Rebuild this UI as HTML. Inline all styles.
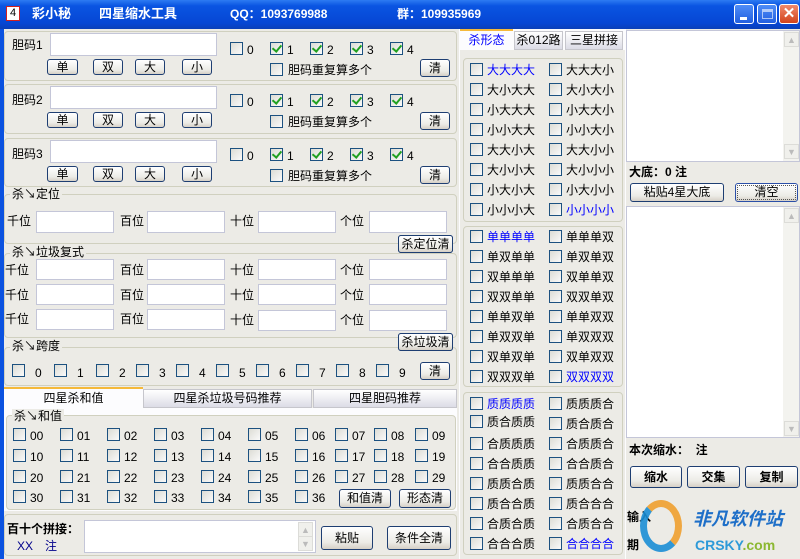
<!DOCTYPE html>
<html><head><meta charset="utf-8">
<style>
*{box-sizing:border-box;margin:0;padding:0}
body{width:800px;height:559px;overflow:hidden;background:#ecebe6;font-family:"Liberation Sans","WenQuanYi Zen Hei","Noto Sans CJK SC",sans-serif;font-size:12px;color:#000;position:relative}
div,span{position:absolute}
.t{white-space:nowrap;line-height:14px}
.title{left:0;top:0;width:800px;height:29px;background:linear-gradient(#2d7bf2,#0a55e2 20%,#0646d4 80%,#0a3fb8);}
.frame{left:0;top:29px;width:4px;height:530px;background:#0b52e0}
.grp{border:1px solid #d0d0bf;border-radius:4px;background:#ecebe6}
.in{background:#fff;border:1px solid #c4c6d8}
.btn{border:1px solid #1e3e72;border-radius:3px;background:linear-gradient(#fff,#ecebe6 70%,#d6d0c6);text-align:center;line-height:14px;font-size:12px}
.cb{width:13px;height:13px;border:1px solid #1c5180;background:linear-gradient(135deg,#dcdcd5,#fafafa)}
.ck::after{content:"";position:absolute;left:3px;top:0px;width:4px;height:7px;border:solid #21a121;border-width:0 2px 2px 0;transform:rotate(40deg)}
.leg{background:#ecebe6;padding:0 2px}
.fs{border:1px solid #d0d0bf;border-radius:4px}
.b{color:#0000ff}
.sb{width:16px;background:#f3f3ef}
.ar{width:15px;height:15px;border:1px solid #dcdcd8;background:#f0f0ec;color:#bbb;font-size:9px;text-align:center;line-height:14px}
</style></head><body>
<div class="title"></div>
<div style="left:6px;top:6px;width:14px;height:15px;border:1px solid #d02020;background:#fff;color:#000;font-size:11px;text-align:center;line-height:13px">4</div>
<div class="t" style="left:32px;top:7px;color:#fff;font-weight:bold;font-size:13px">彩小秘</div>
<div class="t" style="left:99px;top:7px;color:#fff;font-weight:bold;font-size:13px">四星缩水工具</div>
<div class="t" style="left:230px;top:7px;color:#fff;font-weight:bold;font-size:12px">QQ：1093769988</div>
<div class="t" style="left:397px;top:7px;color:#fff;font-weight:bold;font-size:12px">群：109935969</div>
<div style="left:734px;top:4px;width:20px;height:20px;border:1px solid #fff;border-radius:3px;background:linear-gradient(#4f8df7,#225fe0)"><span style="left:5px;top:12px;width:7px;height:3px;background:#fff"></span></div>
<div style="left:757px;top:4px;width:20px;height:20px;border:1px solid #fff;border-radius:3px;background:linear-gradient(#4f8df7,#225fe0)"><span style="left:4px;top:4px;width:11px;height:10px;border:1px solid #fff;border-top-width:3px;opacity:.6"></span></div>
<div style="left:779px;top:4px;width:20px;height:20px;border:1px solid #fff;border-radius:3px;background:linear-gradient(#f08a6c,#d2431c);color:#fff;font-weight:bold;font-size:15px;text-align:center;line-height:18px">✕</div>
<div class="frame"></div>

<!-- 胆码 groups -->
<div class="grp" style="left:4px;top:31px;width:453px;height:50px"></div>
<div class="grp" style="left:4px;top:84px;width:453px;height:50px"></div>
<div class="grp" style="left:4px;top:138px;width:453px;height:49px"></div>

<div class="t" style="left:12px;top:38px">胆码1</div>
<div class="in" style="left:50px;top:33px;width:167px;height:23px"></div>
<div class="btn" style="left:47px;top:59px;width:31px;height:16px">单</div>
<div class="btn" style="left:93px;top:59px;width:30px;height:16px">双</div>
<div class="btn" style="left:135px;top:59px;width:30px;height:16px">大</div>
<div class="btn" style="left:182px;top:59px;width:30px;height:16px">小</div>
<div class="cb" style="left:230px;top:42px"></div><div class="t" style="left:247px;top:43px">0</div>
<div class="cb ck" style="left:270px;top:42px"></div><div class="t" style="left:287px;top:43px">1</div>
<div class="cb ck" style="left:310px;top:42px"></div><div class="t" style="left:327px;top:43px">2</div>
<div class="cb ck" style="left:350px;top:42px"></div><div class="t" style="left:367px;top:43px">3</div>
<div class="cb ck" style="left:390px;top:42px"></div><div class="t" style="left:407px;top:43px">4</div>
<div class="cb" style="left:270px;top:63px"></div><div class="t" style="left:288px;top:63px">胆码重复算多个</div>
<div class="btn" style="left:420px;top:59px;width:30px;height:18px;line-height:16px">清</div>

<div class="t" style="left:12px;top:93px">胆码2</div>
<div class="in" style="left:50px;top:86px;width:167px;height:23px"></div>
<div class="btn" style="left:47px;top:112px;width:31px;height:16px">单</div>
<div class="btn" style="left:93px;top:112px;width:30px;height:16px">双</div>
<div class="btn" style="left:135px;top:112px;width:30px;height:16px">大</div>
<div class="btn" style="left:182px;top:112px;width:30px;height:16px">小</div>
<div class="cb" style="left:230px;top:94px"></div><div class="t" style="left:247px;top:95px">0</div>
<div class="cb ck" style="left:270px;top:94px"></div><div class="t" style="left:287px;top:95px">1</div>
<div class="cb ck" style="left:310px;top:94px"></div><div class="t" style="left:327px;top:95px">2</div>
<div class="cb ck" style="left:350px;top:94px"></div><div class="t" style="left:367px;top:95px">3</div>
<div class="cb ck" style="left:390px;top:94px"></div><div class="t" style="left:407px;top:95px">4</div>
<div class="cb" style="left:270px;top:115px"></div><div class="t" style="left:288px;top:115px">胆码重复算多个</div>
<div class="btn" style="left:420px;top:112px;width:30px;height:18px;line-height:16px">清</div>

<div class="t" style="left:12px;top:147px">胆码3</div>
<div class="in" style="left:50px;top:140px;width:167px;height:23px"></div>
<div class="btn" style="left:47px;top:166px;width:31px;height:16px">单</div>
<div class="btn" style="left:93px;top:166px;width:30px;height:16px">双</div>
<div class="btn" style="left:135px;top:166px;width:30px;height:16px">大</div>
<div class="btn" style="left:182px;top:166px;width:30px;height:16px">小</div>
<div class="cb" style="left:230px;top:148px"></div><div class="t" style="left:247px;top:149px">0</div>
<div class="cb ck" style="left:270px;top:148px"></div><div class="t" style="left:287px;top:149px">1</div>
<div class="cb ck" style="left:310px;top:148px"></div><div class="t" style="left:327px;top:149px">2</div>
<div class="cb ck" style="left:350px;top:148px"></div><div class="t" style="left:367px;top:149px">3</div>
<div class="cb ck" style="left:390px;top:148px"></div><div class="t" style="left:407px;top:149px">4</div>
<div class="cb" style="left:270px;top:169px"></div><div class="t" style="left:288px;top:169px">胆码重复算多个</div>
<div class="btn" style="left:420px;top:166px;width:30px;height:18px;line-height:16px">清</div>

<!-- 定位 -->
<div class="fs" style="left:4px;top:194px;width:453px;height:50px"></div>
<div class="t leg" style="left:10px;top:187px">杀↘定位</div>
<div class="t" style="left:7px;top:214px">千位</div><div class="in" style="left:36px;top:211px;width:78px;height:22px"></div>
<div class="t" style="left:120px;top:214px">百位</div><div class="in" style="left:147px;top:211px;width:78px;height:22px"></div>
<div class="t" style="left:230px;top:214px">十位</div><div class="in" style="left:258px;top:211px;width:78px;height:22px"></div>
<div class="t" style="left:340px;top:214px">个位</div><div class="in" style="left:369px;top:211px;width:78px;height:22px"></div>
<div class="btn" style="left:398px;top:235px;width:55px;height:18px;line-height:16px">杀定位清</div>

<!-- 垃圾复式 -->
<div class="fs" style="left:4px;top:253px;width:453px;height:85px"></div>
<div class="t leg" style="left:10px;top:245px">杀↘垃圾复式</div>
<div class="btn" style="left:398px;top:235px;width:55px;height:18px;line-height:16px">杀定位清</div>
<div class="t" style="left:5px;top:263px">千位</div><div class="in" style="left:36px;top:259px;width:78px;height:21px"></div>
<div class="t" style="left:120px;top:263px">百位</div><div class="in" style="left:147px;top:259px;width:78px;height:21px"></div>
<div class="t" style="left:230px;top:263px">十位</div><div class="in" style="left:258px;top:259px;width:78px;height:21px"></div>
<div class="t" style="left:340px;top:263px">个位</div><div class="in" style="left:369px;top:259px;width:78px;height:21px"></div>
<div class="t" style="left:5px;top:288px">千位</div><div class="in" style="left:36px;top:284px;width:78px;height:21px"></div>
<div class="t" style="left:120px;top:288px">百位</div><div class="in" style="left:147px;top:284px;width:78px;height:21px"></div>
<div class="t" style="left:230px;top:288px">十位</div><div class="in" style="left:258px;top:284px;width:78px;height:21px"></div>
<div class="t" style="left:340px;top:288px">个位</div><div class="in" style="left:369px;top:284px;width:78px;height:21px"></div>
<div class="t" style="left:5px;top:312px">千位</div><div class="in" style="left:36px;top:309px;width:78px;height:21px"></div>
<div class="t" style="left:120px;top:312px">百位</div><div class="in" style="left:147px;top:309px;width:78px;height:21px"></div>
<div class="t" style="left:230px;top:313px">十位</div><div class="in" style="left:258px;top:310px;width:78px;height:21px"></div>
<div class="t" style="left:340px;top:313px">个位</div><div class="in" style="left:369px;top:310px;width:78px;height:21px"></div>
<div class="btn" style="left:398px;top:333px;width:55px;height:18px;line-height:16px">杀垃圾清</div>

<!-- 跨度 -->
<div class="fs" style="left:4px;top:347px;width:453px;height:39px"></div>
<div class="t leg" style="left:10px;top:339px">杀↘跨度</div>
<div class="btn" style="left:398px;top:333px;width:55px;height:18px;line-height:16px">杀垃圾清</div>
<div class="cb" style="left:12px;top:364px"></div><div class="t" style="left:35px;top:366px">0</div>
<div class="cb" style="left:54px;top:364px"></div><div class="t" style="left:77px;top:366px">1</div>
<div class="cb" style="left:96px;top:364px"></div><div class="t" style="left:119px;top:366px">2</div>
<div class="cb" style="left:136px;top:364px"></div><div class="t" style="left:159px;top:366px">3</div>
<div class="cb" style="left:176px;top:364px"></div><div class="t" style="left:199px;top:366px">4</div>
<div class="cb" style="left:216px;top:364px"></div><div class="t" style="left:239px;top:366px">5</div>
<div class="cb" style="left:256px;top:364px"></div><div class="t" style="left:279px;top:366px">6</div>
<div class="cb" style="left:296px;top:364px"></div><div class="t" style="left:319px;top:366px">7</div>
<div class="cb" style="left:336px;top:364px"></div><div class="t" style="left:359px;top:366px">8</div>
<div class="cb" style="left:376px;top:364px"></div><div class="t" style="left:399px;top:366px">9</div>
<div class="btn" style="left:420px;top:362px;width:30px;height:18px;line-height:16px">清</div>

<!-- bottom tabs -->
<div style="left:4px;top:387px;width:139px;height:21px;background:#fcfcfe;border-top:2px solid #f5b93a;text-align:center;line-height:18px">四星杀和值</div>
<div style="left:143px;top:389px;width:169px;height:19px;background:linear-gradient(#fff,#dcdce6);border:1px solid #c6c6cc;text-align:center;line-height:17px">四星杀垃圾号码推荐</div>
<div style="left:313px;top:389px;width:144px;height:19px;background:linear-gradient(#fff,#dcdce6);border:1px solid #c6c6cc;text-align:center;line-height:17px">四星胆码推荐</div>
<div style="left:4px;top:408px;width:453px;height:103px;background:#fcfcfe"></div>
<div class="fs" style="left:6px;top:415px;width:450px;height:95px;background:#ecebe6"></div>
<div class="t leg" style="left:12px;top:409px">杀↘和值</div>
<!-- sum checkboxes rows -->
<div class="cb" style="left:13px;top:428px"></div><div class="t" style="left:30px;top:429px">00</div>
<div class="cb" style="left:60px;top:428px"></div><div class="t" style="left:77px;top:429px">01</div>
<div class="cb" style="left:107px;top:428px"></div><div class="t" style="left:124px;top:429px">02</div>
<div class="cb" style="left:154px;top:428px"></div><div class="t" style="left:171px;top:429px">03</div>
<div class="cb" style="left:201px;top:428px"></div><div class="t" style="left:218px;top:429px">04</div>
<div class="cb" style="left:248px;top:428px"></div><div class="t" style="left:265px;top:429px">05</div>
<div class="cb" style="left:295px;top:428px"></div><div class="t" style="left:312px;top:429px">06</div>
<div class="cb" style="left:335px;top:428px"></div><div class="t" style="left:352px;top:429px">07</div>
<div class="cb" style="left:374px;top:428px"></div><div class="t" style="left:391px;top:429px">08</div>
<div class="cb" style="left:415px;top:428px"></div><div class="t" style="left:432px;top:429px">09</div>

<div class="cb" style="left:13px;top:449px"></div><div class="t" style="left:30px;top:450px">10</div>
<div class="cb" style="left:60px;top:449px"></div><div class="t" style="left:77px;top:450px">11</div>
<div class="cb" style="left:107px;top:449px"></div><div class="t" style="left:124px;top:450px">12</div>
<div class="cb" style="left:154px;top:449px"></div><div class="t" style="left:171px;top:450px">13</div>
<div class="cb" style="left:201px;top:449px"></div><div class="t" style="left:218px;top:450px">14</div>
<div class="cb" style="left:248px;top:449px"></div><div class="t" style="left:265px;top:450px">15</div>
<div class="cb" style="left:295px;top:449px"></div><div class="t" style="left:312px;top:450px">16</div>
<div class="cb" style="left:335px;top:449px"></div><div class="t" style="left:352px;top:450px">17</div>
<div class="cb" style="left:374px;top:449px"></div><div class="t" style="left:391px;top:450px">18</div>
<div class="cb" style="left:415px;top:449px"></div><div class="t" style="left:432px;top:450px">19</div>

<div class="cb" style="left:13px;top:470px"></div><div class="t" style="left:30px;top:471px">20</div>
<div class="cb" style="left:60px;top:470px"></div><div class="t" style="left:77px;top:471px">21</div>
<div class="cb" style="left:107px;top:470px"></div><div class="t" style="left:124px;top:471px">22</div>
<div class="cb" style="left:154px;top:470px"></div><div class="t" style="left:171px;top:471px">23</div>
<div class="cb" style="left:201px;top:470px"></div><div class="t" style="left:218px;top:471px">24</div>
<div class="cb" style="left:248px;top:470px"></div><div class="t" style="left:265px;top:471px">25</div>
<div class="cb" style="left:295px;top:470px"></div><div class="t" style="left:312px;top:471px">26</div>
<div class="cb" style="left:335px;top:470px"></div><div class="t" style="left:352px;top:471px">27</div>
<div class="cb" style="left:374px;top:470px"></div><div class="t" style="left:391px;top:471px">28</div>
<div class="cb" style="left:415px;top:470px"></div><div class="t" style="left:432px;top:471px">29</div>

<div class="cb" style="left:13px;top:490px"></div><div class="t" style="left:30px;top:491px">30</div>
<div class="cb" style="left:60px;top:490px"></div><div class="t" style="left:77px;top:491px">31</div>
<div class="cb" style="left:107px;top:490px"></div><div class="t" style="left:124px;top:491px">32</div>
<div class="cb" style="left:154px;top:490px"></div><div class="t" style="left:171px;top:491px">33</div>
<div class="cb" style="left:201px;top:490px"></div><div class="t" style="left:218px;top:491px">34</div>
<div class="cb" style="left:248px;top:490px"></div><div class="t" style="left:265px;top:491px">35</div>
<div class="cb" style="left:295px;top:490px"></div><div class="t" style="left:312px;top:491px">36</div>
<div class="btn" style="left:339px;top:489px;width:52px;height:19px;line-height:17px">和值清</div>
<div class="btn" style="left:399px;top:489px;width:52px;height:19px;line-height:17px">形态清</div>

<!-- bottom bar -->
<div class="grp" style="left:4px;top:514px;width:453px;height:42px"></div>
<div class="t" style="left:7px;top:522px;font-weight:bold">百十个拼接：</div>
<div class="t" style="left:17px;top:539px;color:#00008b">XX</div>
<div class="t" style="left:45px;top:539px;color:#00008b">注</div>
<div class="in" style="left:84px;top:520px;width:232px;height:33px"></div>
<div class="ar" style="left:298px;top:522px">▲</div><div class="ar" style="left:298px;top:536px">▼</div>
<div class="btn" style="left:321px;top:526px;width:52px;height:24px;line-height:22px">粘贴</div>
<div class="btn" style="left:387px;top:526px;width:64px;height:24px;line-height:22px">条件全清</div>

<!-- middle column -->
<div style="left:459px;top:29px;width:167px;height:530px;background:#fcfcfe"></div>
<div style="left:460px;top:29px;width:53px;height:21px;background:#fcfcfe;border-top:2px solid #f5b93a;text-align:center;line-height:18px;color:#0000ff">杀形态</div>
<div style="left:514px;top:31px;width:49px;height:19px;background:linear-gradient(#fff,#dcdce6);border:1px solid #c6c6cc;text-align:center;line-height:17px">杀012路</div>
<div style="left:565px;top:31px;width:58px;height:19px;background:linear-gradient(#fff,#dcdce6);border:1px solid #c6c6cc;text-align:center;line-height:17px">三星拼接</div>
<div style="left:460px;top:50px;width:165px;height:509px;background:#ecebe6"></div>

<div class="grp" style="left:463px;top:58px;width:160px;height:164px"></div>
<div class="grp" style="left:463px;top:226px;width:160px;height:161px"></div>
<div class="grp" style="left:463px;top:392px;width:160px;height:163px"></div>

<div class="cb" style="left:470px;top:63px"></div><div class="t b" style="left:487px;top:63px">大大大大</div>
<div class="cb" style="left:549px;top:63px"></div><div class="t" style="left:566px;top:63px">大大大小</div>
<div class="cb" style="left:470px;top:83px"></div><div class="t" style="left:487px;top:83px">大小大大</div>
<div class="cb" style="left:549px;top:83px"></div><div class="t" style="left:566px;top:83px">大小大小</div>
<div class="cb" style="left:470px;top:103px"></div><div class="t" style="left:487px;top:103px">小大大大</div>
<div class="cb" style="left:549px;top:103px"></div><div class="t" style="left:566px;top:103px">小大大小</div>
<div class="cb" style="left:470px;top:123px"></div><div class="t" style="left:487px;top:123px">小小大大</div>
<div class="cb" style="left:549px;top:123px"></div><div class="t" style="left:566px;top:123px">小小大小</div>
<div class="cb" style="left:470px;top:143px"></div><div class="t" style="left:487px;top:143px">大大小大</div>
<div class="cb" style="left:549px;top:143px"></div><div class="t" style="left:566px;top:143px">大大小小</div>
<div class="cb" style="left:470px;top:163px"></div><div class="t" style="left:487px;top:163px">大小小大</div>
<div class="cb" style="left:549px;top:163px"></div><div class="t" style="left:566px;top:163px">大小小小</div>
<div class="cb" style="left:470px;top:183px"></div><div class="t" style="left:487px;top:183px">小大小大</div>
<div class="cb" style="left:549px;top:183px"></div><div class="t" style="left:566px;top:183px">小大小小</div>
<div class="cb" style="left:470px;top:203px"></div><div class="t" style="left:487px;top:203px">小小小大</div>
<div class="cb" style="left:549px;top:203px"></div><div class="t b" style="left:566px;top:203px">小小小小</div>

<div class="cb" style="left:470px;top:230px"></div><div class="t b" style="left:487px;top:230px">单单单单</div>
<div class="cb" style="left:549px;top:230px"></div><div class="t" style="left:566px;top:230px">单单单双</div>
<div class="cb" style="left:470px;top:250px"></div><div class="t" style="left:487px;top:250px">单双单单</div>
<div class="cb" style="left:549px;top:250px"></div><div class="t" style="left:566px;top:250px">单双单双</div>
<div class="cb" style="left:470px;top:270px"></div><div class="t" style="left:487px;top:270px">双单单单</div>
<div class="cb" style="left:549px;top:270px"></div><div class="t" style="left:566px;top:270px">双单单双</div>
<div class="cb" style="left:470px;top:290px"></div><div class="t" style="left:487px;top:290px">双双单单</div>
<div class="cb" style="left:549px;top:290px"></div><div class="t" style="left:566px;top:290px">双双单双</div>
<div class="cb" style="left:470px;top:310px"></div><div class="t" style="left:487px;top:310px">单单双单</div>
<div class="cb" style="left:549px;top:310px"></div><div class="t" style="left:566px;top:310px">单单双双</div>
<div class="cb" style="left:470px;top:330px"></div><div class="t" style="left:487px;top:330px">单双双单</div>
<div class="cb" style="left:549px;top:330px"></div><div class="t" style="left:566px;top:330px">单双双双</div>
<div class="cb" style="left:470px;top:350px"></div><div class="t" style="left:487px;top:350px">双单双单</div>
<div class="cb" style="left:549px;top:350px"></div><div class="t" style="left:566px;top:350px">双单双双</div>
<div class="cb" style="left:470px;top:370px"></div><div class="t" style="left:487px;top:370px">双双双单</div>
<div class="cb" style="left:549px;top:370px"></div><div class="t b" style="left:566px;top:370px">双双双双</div>

<div class="cb" style="left:470px;top:397px"></div><div class="t b" style="left:487px;top:397px">质质质质</div>
<div class="cb" style="left:549px;top:397px"></div><div class="t" style="left:566px;top:397px">质质质合</div>
<div class="cb" style="left:470px;top:415px"></div><div class="t" style="left:487px;top:415px">质合质质</div>
<div class="cb" style="left:549px;top:417px"></div><div class="t" style="left:566px;top:417px">质合质合</div>
<div class="cb" style="left:470px;top:437px"></div><div class="t" style="left:487px;top:437px">合质质质</div>
<div class="cb" style="left:549px;top:437px"></div><div class="t" style="left:566px;top:437px">合质质合</div>
<div class="cb" style="left:470px;top:457px"></div><div class="t" style="left:487px;top:457px">合合质质</div>
<div class="cb" style="left:549px;top:457px"></div><div class="t" style="left:566px;top:457px">合合质合</div>
<div class="cb" style="left:470px;top:477px"></div><div class="t" style="left:487px;top:477px">质质合质</div>
<div class="cb" style="left:549px;top:477px"></div><div class="t" style="left:566px;top:477px">质质合合</div>
<div class="cb" style="left:470px;top:497px"></div><div class="t" style="left:487px;top:497px">质合合质</div>
<div class="cb" style="left:549px;top:497px"></div><div class="t" style="left:566px;top:497px">质合合合</div>
<div class="cb" style="left:470px;top:517px"></div><div class="t" style="left:487px;top:517px">合质合质</div>
<div class="cb" style="left:549px;top:517px"></div><div class="t" style="left:566px;top:517px">合质合合</div>
<div class="cb" style="left:470px;top:537px"></div><div class="t" style="left:487px;top:537px">合合合质</div>
<div class="cb" style="left:549px;top:537px"></div><div class="t b" style="left:566px;top:537px">合合合合</div>

<!-- right column -->
<div class="in" style="left:626px;top:30px;width:174px;height:132px"></div>
<div class="sb" style="left:783px;top:31px;height:130px"></div>
<div class="ar" style="left:784px;top:32px">▲</div><div class="ar" style="left:784px;top:144px">▼</div>
<div class="t" style="left:629px;top:165px;font-weight:bold">大底：0 注</div>
<div class="btn" style="left:630px;top:183px;width:94px;height:19px;line-height:17px">粘贴4星大底</div>
<div class="btn" style="left:735px;top:183px;width:63px;height:19px;line-height:17px;border-color:#2b4fa8;outline:1px dotted #555;outline-offset:-3px">清空</div>
<div class="in" style="left:626px;top:206px;width:174px;height:232px"></div>
<div class="sb" style="left:783px;top:207px;height:230px"></div>
<div class="ar" style="left:784px;top:208px">▲</div><div class="ar" style="left:784px;top:421px">▼</div>
<div class="t" style="left:629px;top:443px;font-weight:bold">本次缩水：&nbsp; 注</div>
<div class="btn" style="left:630px;top:466px;width:52px;height:22px;line-height:20px;font-weight:bold">缩水</div>
<div class="btn" style="left:687px;top:466px;width:53px;height:22px;line-height:20px;font-weight:bold">交集</div>
<div class="btn" style="left:745px;top:466px;width:53px;height:22px;line-height:20px;font-weight:bold">复制</div>
<div class="t" style="left:627px;top:510px;font-weight:bold">输入</div>
<div class="t" style="left:627px;top:538px;font-weight:bold">期</div>
<div style="left:640px;top:500px;width:42px;height:52px;border-radius:50%;border:7px solid #1b8fd6;border-right-color:#f0a030;border-top-color:#f0a030;opacity:.9"></div>
<div class="t" style="left:693px;top:512px;color:#1e6fc8;font-weight:bold;font-size:18px;font-style:italic">非凡软件站</div>
<div class="t" style="left:695px;top:538px;color:#2e9ad8;font-weight:bold;font-size:14px">CRSKY<span style="position:static;color:#8cb832">.com</span></div>
</body></html>
